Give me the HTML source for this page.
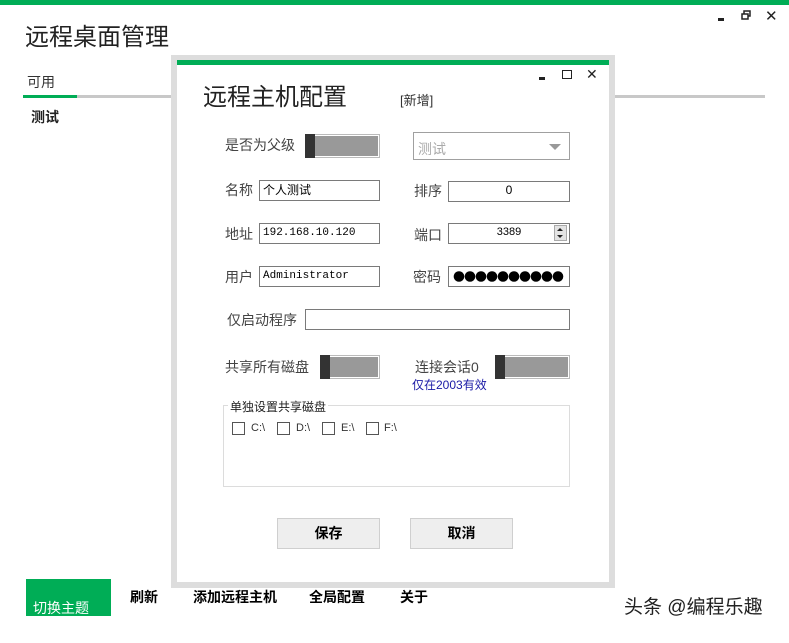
<!DOCTYPE html>
<html><head><meta charset="utf-8">
<style>
*{margin:0;padding:0;box-sizing:border-box}
body{width:789px;height:643px;position:relative;background:#fff;overflow:hidden;font-family:"Liberation Sans","Microsoft YaHei","Noto Sans CJK SC",sans-serif;color:#333}
.a{position:absolute;white-space:nowrap}
.lbl{font-size:14px;color:#444;line-height:16px}
.inp{position:absolute;border:1px solid #7a7a7a;background:#fff;height:21px;font-size:12px;line-height:18px;padding-left:3px;color:#000}
.tog{position:absolute;border:1px solid #bbb;background:#999;outline:1px solid #fff;outline-offset:-2px}
.tog i{position:absolute;left:-1px;top:-1px;bottom:-1px;width:10px;background:#333}
.cb{position:absolute;width:13px;height:13px;border:1px solid #555;background:#fff}
.btn{position:absolute;background:#eeeeee;border:1px solid #cfcfcf;font-size:14px;font-weight:bold;text-align:center;line-height:28px;color:#000}
.mn{font-size:14px;font-weight:bold;color:#000}
</style></head><body>
<div class="a" style="left:0;top:0;width:789px;height:5px;background:#00ad56"></div>
<div class="a" style="left:718px;top:18px;width:6px;height:3px;background:#222"></div>
<svg class="a" style="left:741px;top:10px" width="10" height="10"><rect x="3" y="1" width="6" height="5" fill="none" stroke="#222" stroke-width="1.5"/><rect x="1" y="4" width="6" height="5" fill="#fff" stroke="#222" stroke-width="1.5"/></svg>
<div class="a" style="left:765px;top:7px;font-size:15px;color:#222">✕</div>
<div class="a" style="left:25px;top:23px;font-size:24px;color:#222;line-height:30px">远程桌面管理</div>
<div class="a" style="left:27px;top:72px;font-size:14px;color:#333">可用</div>
<div class="a" style="left:23px;top:95px;width:54px;height:3px;background:#00ad56"></div>
<div class="a" style="left:77px;top:95px;width:688px;height:3px;background:#c8c8c8"></div>
<div class="a" style="left:31px;top:107px;font-size:14px;font-weight:bold;color:#222">测试</div>

<div class="a" style="left:171px;top:55px;width:444px;height:533px;background:#dddddd"></div>
<div class="a" style="left:177px;top:60px;width:432px;height:522px;background:#fff"></div>
<div class="a" style="left:177px;top:60px;width:432px;height:5px;background:#00ad56"></div>
<div class="a" style="left:539px;top:77px;width:6px;height:3px;background:#222"></div>
<div class="a" style="left:562px;top:70px;width:10px;height:9px;border:1.5px solid #222"></div>
<div class="a" style="left:586px;top:66px;font-size:14px;color:#222">✕</div>
<div class="a" style="left:203px;top:84px;font-size:24px;color:#222;line-height:28px">远程主机配置</div>
<div class="a" style="left:400px;top:90px;font-size:13px;color:#333">[新增]</div>

<div class="a lbl" style="left:225px;top:137px">是否为父级</div>
<div class="tog" style="left:305px;top:134px;width:75px;height:24px"><i></i></div>
<div class="a" style="left:413px;top:132px;width:157px;height:28px;border:1px solid #a0a0a0;background:#fff"></div>
<div class="a" style="left:418px;top:139px;font-size:14px;color:#aaa">测试</div>
<div class="a" style="left:549px;top:144px;width:0;height:0;border-left:6px solid transparent;border-right:6px solid transparent;border-top:6px solid #999"></div>

<div class="a lbl" style="left:225px;top:182px">名称</div>
<div class="inp" style="left:259px;top:180px;width:121px">个人测试</div>
<div class="a lbl" style="left:414px;top:183px">排序</div>
<div class="inp" style="left:448px;top:181px;width:122px;text-align:center;padding:0;line-height:16px">0</div>

<div class="a lbl" style="left:225px;top:226px">地址</div>
<div class="inp" style="left:259px;top:223px;width:121px;font-family:'Liberation Mono',monospace;font-size:11px">192.168.10.120</div>
<div class="a lbl" style="left:414px;top:227px">端口</div>
<div class="inp" style="left:448px;top:223px;width:122px;text-align:center;padding:0;line-height:16px;font-size:11px">3389</div>
<div class="a" style="left:554px;top:225px;width:13px;height:16px;background:#e4e4e4;border:1px solid #aaa"></div>
<div class="a" style="left:557px;top:228px;border-left:3px solid transparent;border-right:3px solid transparent;border-bottom:3px solid #222"></div>
<div class="a" style="left:557px;top:235px;border-left:3px solid transparent;border-right:3px solid transparent;border-top:3px solid #222"></div>

<div class="a lbl" style="left:225px;top:269px">用户</div>
<div class="inp" style="left:259px;top:266px;width:121px;font-family:'Liberation Mono',monospace;font-size:11px">Administrator</div>
<div class="a lbl" style="left:413px;top:269px">密码</div>
<div class="inp" style="left:448px;top:266px;width:122px;padding-left:2px;overflow:hidden">
<svg width="116" height="19" style="display:block"><g fill="#000">
<circle cx="8" cy="9.5" r="5.3"/><circle cx="19" cy="9.5" r="5.3"/><circle cx="30" cy="9.5" r="5.3"/><circle cx="41" cy="9.5" r="5.3"/><circle cx="52" cy="9.5" r="5.3"/><circle cx="63" cy="9.5" r="5.3"/><circle cx="74" cy="9.5" r="5.3"/><circle cx="85" cy="9.5" r="5.3"/><circle cx="96" cy="9.5" r="5.3"/><circle cx="107" cy="9.5" r="5.3"/></g></svg></div>

<div class="a lbl" style="left:227px;top:312px">仅启动程序</div>
<div class="inp" style="left:305px;top:309px;width:265px"></div>

<div class="a lbl" style="left:225px;top:359px">共享所有磁盘</div>
<div class="tog" style="left:320px;top:355px;width:60px;height:24px"><i></i></div>
<div class="a lbl" style="left:415px;top:359px">连接会话0</div>
<div class="tog" style="left:495px;top:355px;width:75px;height:24px"><i></i></div>
<div class="a" style="left:412px;top:376px;font-size:12px;color:#1a1aa6">仅在2003有效</div>

<div class="a" style="left:223px;top:405px;width:347px;height:82px;border:1px solid #dcdcdc"></div>
<div class="a" style="left:228px;top:398px;font-size:12px;color:#222;background:#fff;padding:0 2px">单独设置共享磁盘</div>
<div class="cb" style="left:232px;top:422px"></div><div class="a" style="left:251px;top:422px;font-size:11px">C:\</div>
<div class="cb" style="left:277px;top:422px"></div><div class="a" style="left:296px;top:422px;font-size:11px">D:\</div>
<div class="cb" style="left:322px;top:422px"></div><div class="a" style="left:341px;top:422px;font-size:11px">E:\</div>
<div class="cb" style="left:366px;top:422px"></div><div class="a" style="left:384px;top:422px;font-size:11px">F:\</div>

<div class="btn" style="left:277px;top:518px;width:103px;height:31px">保存</div>
<div class="btn" style="left:410px;top:518px;width:103px;height:31px">取消</div>

<div class="a" style="left:26px;top:579px;width:85px;height:37px;background:#00ad56"></div>
<div class="a" style="left:33px;top:598px;font-size:14px;color:#fff">切换主题</div>
<div class="a mn" style="left:130px;top:587px">刷新</div>
<div class="a mn" style="left:193px;top:587px">添加远程主机</div>
<div class="a mn" style="left:309px;top:587px">全局配置</div>
<div class="a mn" style="left:400px;top:587px">关于</div>
<div class="a" style="left:624px;top:592px;font-size:19px;color:#222">头条 @编程乐趣</div>
</body></html>
